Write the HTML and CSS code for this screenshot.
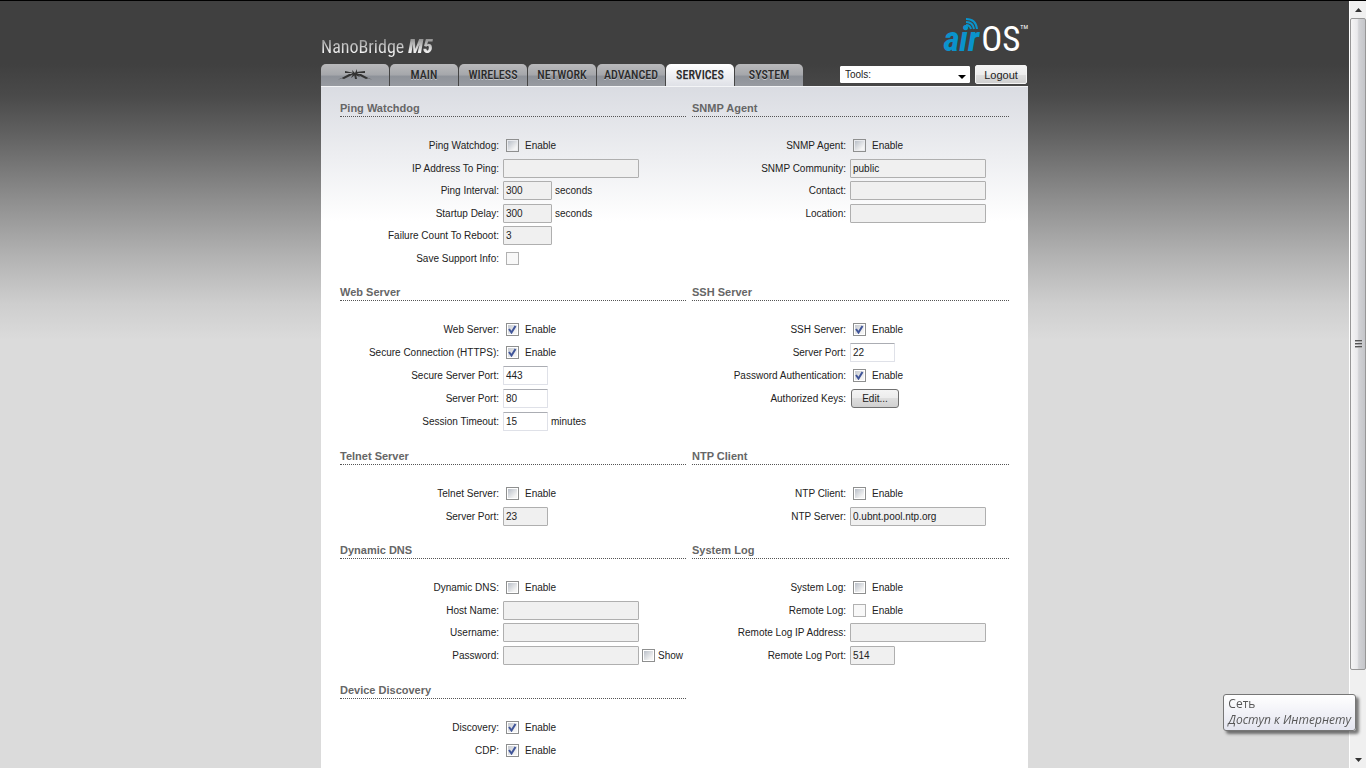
FILE: index.html
```html
<!DOCTYPE html>
<html lang="en">
<head>
    <meta charset="UTF-8">
    <meta name="viewport" content="width=device-width, initial-scale=1.0">
    <title>NanoBridge M5 - Services</title>
    <link rel="stylesheet" href="styles.css">
</head>
<body>
    <div class="viewport">
        <div class="container">
            <div class="header">
                <div class="product">NanoBridge <b>M5</b></div>
                <div class="airos">
                    <span class="air">air</span>
                    <span class="os">OS</span>
                    <span class="tm">TM</span>
                    <svg class="waves" width="14" height="13" viewBox="0 0 14 13" fill="none" stroke="#0a93cc" stroke-width="2">
                        <path d="M1 8 Q5 8 6 12"/>
                        <path d="M1 5 Q8 5 9 12"/>
                        <path d="M1 2 Q11 2 12 12"/>
                    </svg>
                </div>
            </div>
            <div class="nav">
                <div class="tabs">
                    <a class="tab" href="#" aria-label="Ubiquiti">
                        <svg width="36" height="12" viewBox="0 0 36 12" fill="#333">
                            <path d="M1 11 L12 5 L17 5 L7 10 L4 9 Z"/>
                            <path d="M35 11 L24 5 L19 5 L29 10 L32 9 Z"/>
                            <path d="M8 2 L17 4 L17 6 L14 4 L8 4 Z M28 2 L19 3 L19 5 L22 4 L28 4 Z"/>
                            <path d="M15 1 L18 4 L20 0 L20 4 L23 8 L18 6 L14 9 L16 5 Z"/>
                            <path d="M17 5 L19 5 L20 10 L18 10 Z"/>
                        </svg>
                    </a>
                    <a class="tab" href="#">MAIN</a>
                    <a class="tab" href="#">WIRELESS</a>
                    <a class="tab" href="#">NETWORK</a>
                    <a class="tab" href="#">ADVANCED</a>
                    <a class="tab active" href="#">SERVICES</a>
                    <a class="tab" href="#">SYSTEM</a>
                </div>
                <div class="tools">
                    <select class="tools-select" aria-label="Tools">
                        <option>Tools:</option>
                    </select>
                    <button class="logout" type="button">Logout</button>
                </div>
            </div>
            <form class="panel">
                <div class="section">
                    <h2>Ping Watchdog</h2>
                    <div class="row"><label class="name" for="pwdog">Ping Watchdog:</label><input type="checkbox" id="pwdog"><label for="pwdog">Enable</label></div>
                    <div class="row"><label class="name" for="pingHost">IP Address To Ping:</label><input type="text" id="pingHost" disabled></div>
                    <div class="row"><label class="name" for="pingInterval">Ping Interval:</label><input type="text" class="num" id="pingInterval" value="300" disabled><span class="unit">seconds</span></div>
                    <div class="row"><label class="name" for="startDelay">Startup Delay:</label><input type="text" class="num" id="startDelay" value="300" disabled><span class="unit">seconds</span></div>
                    <div class="row"><label class="name" for="failCount">Failure Count To Reboot:</label><input type="text" class="num" id="failCount" value="3" disabled></div>
                    <div class="row"><label class="name" for="saveInfo">Save Support Info:</label><input type="checkbox" id="saveInfo" disabled></div>
                </div>
                <div class="section">
                    <h2>SNMP Agent</h2>
                    <div class="row"><label class="name" for="snmp">SNMP Agent:</label><input type="checkbox" id="snmp"><label for="snmp">Enable</label></div>
                    <div class="row"><label class="name" for="community">SNMP Community:</label><input type="text" id="community" value="public" disabled></div>
                    <div class="row"><label class="name" for="contact">Contact:</label><input type="text" id="contact" disabled></div>
                    <div class="row"><label class="name" for="location">Location:</label><input type="text" id="location" disabled></div>
                </div>

                <div class="section even">
                    <h2>Web Server</h2>
                    <div class="row"><label class="name" for="web">Web Server:</label><input type="checkbox" id="web" checked><label for="web">Enable</label></div>
                    <div class="row"><label class="name" for="https">Secure Connection (HTTPS):</label><input type="checkbox" id="https" checked><label for="https">Enable</label></div>
                    <div class="row"><label class="name" for="httpsPort">Secure Server Port:</label><input type="text" class="port" id="httpsPort" value="443"></div>
                    <div class="row"><label class="name" for="httpPort">Server Port:</label><input type="text" class="port" id="httpPort" value="80"></div>
                    <div class="row"><label class="name" for="timeout">Session Timeout:</label><input type="text" class="port" id="timeout" value="15"><span class="unit">minutes</span></div>
                </div>
                <div class="section even">
                    <h2>SSH Server</h2>
                    <div class="row"><label class="name" for="ssh">SSH Server:</label><input type="checkbox" id="ssh" checked><label for="ssh">Enable</label></div>
                    <div class="row"><label class="name" for="sshPort">Server Port:</label><input type="text" class="port" id="sshPort" value="22"></div>
                    <div class="row"><label class="name" for="sshPass">Password Authentication:</label><input type="checkbox" id="sshPass" checked><label for="sshPass">Enable</label></div>
                    <div class="row"><label class="name" for="keys">Authorized Keys:</label><button class="edit" type="button" id="keys">Edit...</button></div>
                </div>

                <div class="section">
                    <h2>Telnet Server</h2>
                    <div class="row"><label class="name" for="telnet">Telnet Server:</label><input type="checkbox" id="telnet"><label for="telnet">Enable</label></div>
                    <div class="row"><label class="name" for="telnetPort">Server Port:</label><input type="text" class="port" id="telnetPort" value="23" disabled></div>
                </div>
                <div class="section">
                    <h2>NTP Client</h2>
                    <div class="row"><label class="name" for="ntp">NTP Client:</label><input type="checkbox" id="ntp"><label for="ntp">Enable</label></div>
                    <div class="row"><label class="name" for="ntpServer">NTP Server:</label><input type="text" id="ntpServer" value="0.ubnt.pool.ntp.org" disabled></div>
                </div>

                <div class="section">
                    <h2>Dynamic DNS</h2>
                    <div class="row"><label class="name" for="ddns">Dynamic DNS:</label><input type="checkbox" id="ddns"><label for="ddns">Enable</label></div>
                    <div class="row"><label class="name" for="ddnsHost">Host Name:</label><input type="text" id="ddnsHost" disabled></div>
                    <div class="row"><label class="name" for="ddnsUser">Username:</label><input type="text" id="ddnsUser" disabled></div>
                    <div class="row show-row"><label class="name" for="ddnsPass">Password:</label><input type="password" id="ddnsPass" disabled><input type="checkbox" id="showPass"><label for="showPass">Show</label></div>
                </div>
                <div class="section">
                    <h2>System Log</h2>
                    <div class="row"><label class="name" for="syslog">System Log:</label><input type="checkbox" id="syslog"><label for="syslog">Enable</label></div>
                    <div class="row"><label class="name" for="rlog">Remote Log:</label><input type="checkbox" id="rlog" disabled><label for="rlog">Enable</label></div>
                    <div class="row"><label class="name" for="rlogIp">Remote Log IP Address:</label><input type="text" id="rlogIp" disabled></div>
                    <div class="row"><label class="name" for="rlogPort">Remote Log Port:</label><input type="text" class="port" id="rlogPort" value="514" disabled></div>
                </div>

                <div class="section">
                    <h2>Device Discovery</h2>
                    <div class="row"><label class="name" for="discovery">Discovery:</label><input type="checkbox" id="discovery" checked><label for="discovery">Enable</label></div>
                    <div class="row"><label class="name" for="cdp">CDP:</label><input type="checkbox" id="cdp" checked><label for="cdp">Enable</label></div>
                </div>
            </form>
        </div>
    </div>

    <div class="scrollbar" aria-hidden="true">
        <svg class="arrow" width="17" height="17" viewBox="0 0 17 17"><path d="M5 11 L8.500 7 L12 11 Z" fill="#333"/></svg>
        <div class="track">
            <div class="thumb"><i></i><i></i><i></i></div>
        </div>
        <svg class="arrow" width="17" height="17" viewBox="0 0 17 17"><path d="M5 7 L12 7 L8.500 11 Z" fill="#333"/></svg>
    </div>

    <div class="tooltip" lang="ru">
        <div>Сеть</div>
        <em>Доступ к Интернету</em>
    </div>
</body>
</html>
```
FILE: styles.css
```css
* {
    box-sizing: border-box;
}
body {
    margin: 0;
    height: 100vh;
    display: flex;
    overflow: hidden;
    border-top: 1px solid #000;
    background: #dbdbdb linear-gradient(#404040 64px, #4a4a4a 96px, #626262 136px, #8e8e8e 200px, #b2b2b2 256px, #cecece 304px, #dbdbdb 340px);
    font-family: "Liberation Sans", Arial, sans-serif;
    font-size: 10px;
    color: #222;
}
.viewport {
    flex: 1;
    overflow: hidden;
}
.container {
    max-width: 707px;
    min-height: 100%;
    margin: 0 auto;
    display: flex;
    flex-direction: column;
}

/* header */
.header {
    height: 63px;
    display: flex;
    justify-content: space-between;
    align-items: flex-end;
}
.product {
    font-family: "Roboto Condensed", Roboto, sans-serif;
    font-size: 18px;
    line-height: 24px;
    padding: 0 2px 5px 0;
    background: linear-gradient(#8c8c8c 4px, #f0f0f0 18px);
    background-clip: text;
    -webkit-background-clip: text;
    color: transparent;
}
.product b {
    font-size: 20px;
    font-style: italic;
    font-weight: 900;
}
.airos {
    position: relative;
    display: flex;
    align-items: flex-start;
    font-family: "Roboto Condensed", Roboto, sans-serif;
    font-size: 35px;
    line-height: 48px;
}
.air {
    font-style: italic;
    font-weight: bold;
    color: #0a93cc;
}
.os {
    margin-left: 2px;
    color: #fff;
}
.tm {
    font-size: 6px;
    line-height: 22px;
    color: #fff;
}
.waves {
    position: absolute;
    left: 22px;
    top: 1px;
}
.nav {
    display: flex;
    justify-content: space-between;
}
.tabs {
    display: flex;
    gap: 1px;
}
.tab {
    width: 68px;
    height: 22px;
    display: flex;
    align-items: center;
    justify-content: center;
    border-radius: 5px 5px 0 0;
    background: linear-gradient(#b9b9bb, #a5a7ab 50%, #8e9299 55%, #989ba1);
    font-family: "Roboto Condensed", Roboto, sans-serif;
    font-size: 12px;
    font-weight: 500;
    line-height: 22px;
    color: #2a2a2a;
    text-decoration: none;
    text-shadow: 0 1px 0 #c4c6ca;
}
.tab.active {
    background: linear-gradient(#fff, #dfe1e7);
}
.tools {
    display: flex;
    gap: 5px;
    padding: 1px 1px 0 0;
}
.tools-select {
    width: 130px;
    height: 17px;
    margin-top: 1px;
    padding: 0 4px;
    border: 1px solid #fff;
    border-radius: 1px;
    appearance: none;
    font: 10px "Liberation Sans", Arial, sans-serif;
    color: #222;
    background: #fff url("data:image/svg+xml,%3Csvg xmlns='http://www.w3.org/2000/svg' width='8' height='5'%3E%3Cpath d='M0 0h8L4 4z'/%3E%3C/svg%3E") no-repeat right 3px bottom 2px;
}
.logout,
.edit {
    padding: 0;
    border: 1px solid #8a8a8a;
    border-radius: 2px;
    background: linear-gradient(#f4f4f4, #ececec 50%, #dedede 50%, #d0d0d0);
    font: 10px "Liberation Sans", Arial, sans-serif;
    color: #222;
}
.logout {
    width: 52px;
    height: 19px;
    border-color: #f4f4f4;
    font-size: 11px;
}
.edit {
    width: 48px;
    height: 19px;
    margin-left: 1px;
    border-color: #707070;
    border-radius: 3px;
}

/* settings */
.panel {
    flex: 1;
    display: grid;
    grid-template-columns: 346fr 317fr;
    column-gap: 6px;
    align-content: start;
    padding: 13px 19px 0;
    border-top: 1px solid #f4f5f7;
    background: #fff linear-gradient(#dadce2, #fff 134px);
}
.section {
    margin-bottom: 15px;
}
.section h2 {
    margin: 0 0 17px;
    border-bottom: 1px dotted #555;
    font-size: 11px;
    line-height: 16px;
    color: #666;
}
.row {
    display: flex;
    align-items: center;
    height: 23px;
}
/* h2 is the first child, so text rows alternate 23px / 22px */
.row:nth-child(odd) {
    height: 22px;
}
.even .row,
.section .show-row {
    height: 23px;
}
.name {
    width: 163px;
    padding-right: 4px;
    text-align: right;
}
.section:nth-child(even) .name {
    width: 158px;
}
input[type="text"],
input[type="password"] {
    width: 136px;
    height: 19px;
    padding: 0 2px;
    border: 1px solid #dfe1e8;
    border-top-color: #abadb3;
    border-radius: 1px;
    background: #fff;
    font: 10px "Liberation Sans", Arial, sans-serif;
    color: #222;
}
input[type="text"]:disabled,
input[type="password"]:disabled {
    border-color: #afafaf;
    background: #f0f0f0;
}
.section .num {
    width: 49px;
}
.section .port {
    width: 45px;
}
.unit {
    margin-left: 3px;
}
input[type="checkbox"] {
    appearance: none;
    width: 13px;
    height: 13px;
    margin: 0 6px 0 3px;
    padding: 1px;
    border: 1px solid #8e8f8f;
    background: #f4f4f4 linear-gradient(135deg, #b9bfc8, #f4f4f4 80%) no-repeat content-box;
}
input[type="checkbox"]:disabled {
    border-color: #b1b1b1;
    background: #f8f8f8;
}
input[type="checkbox"]:checked {
    background: url("data:image/svg+xml,%3Csvg xmlns='http://www.w3.org/2000/svg' viewBox='0 0 9 9'%3E%3Cpath d='M1 4l2.500 3.500L7.500 1' fill='none' stroke='%23405599' stroke-width='2'/%3E%3C/svg%3E") no-repeat content-box, #f4f4f4 linear-gradient(135deg, #c5c9d0, #f4f4f4 80%) no-repeat content-box;
}
.show-row input[type="checkbox"] {
    margin-right: 3px;
}

/* scrollbar */
.scrollbar {
    width: 17px;
    display: flex;
    flex-direction: column;
    background: #f0f0f0;
    border-left: 1px solid #fff;
}
.track {
    flex: 1;
}
.thumb {
    height: 89%;
    display: flex;
    flex-direction: column;
    align-items: center;
    justify-content: center;
    gap: 1px;
    border: 1px solid #979797;
    border-radius: 2px;
    background: linear-gradient(90deg, #f5f5f5, #e9e9eb 45%, #d2d3d6 55%, #c4c5c9);
}
.thumb i {
    width: 7px;
    height: 2px;
    border-top: 1px solid #555;
    background: #aaa;
}

.tooltip {
    position: fixed;
    right: 10px;
    bottom: 37px;
    padding: 1px 4px 2px;
    border: 1px solid #767676;
    border-radius: 3px;
    background: linear-gradient(#fff, #e4e5f0);
    box-shadow: 3px 3px 3px rgba(0, 0, 0, 0.5);
    font-family: "Open Sans", "Noto Sans", sans-serif;
    font-size: 12px;
    line-height: 16px;
    color: #575757;
}
```
